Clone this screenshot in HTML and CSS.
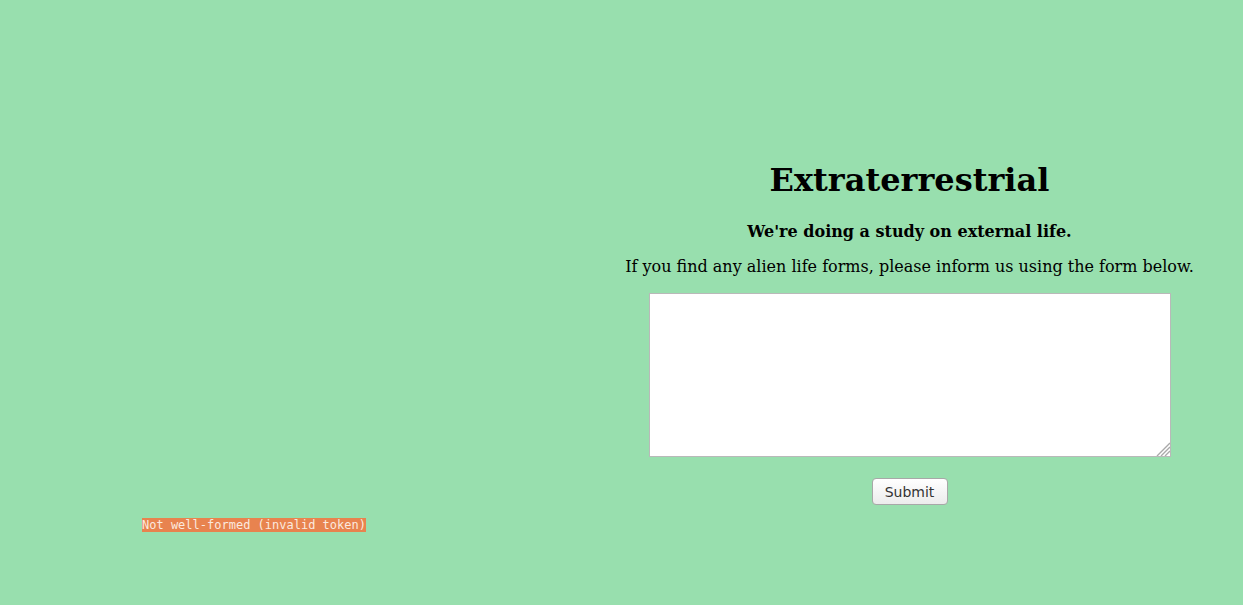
FILE: index.html
```html
<!DOCTYPE html>
<html>
<head>
<meta charset="utf-8">
<link rel="stylesheet" href="styles.css">
</head>
<body>
<div class="page">
  <div class="left">
    <span class="error">Not well-formed (invalid token)</span>
  </div>
  <div class="right">
    <h1 class="title">Extraterrestrial</h1>
    <p class="lead">We're doing a study on external life.</p>
    <p class="info">If you find any alien life forms, please inform us using the form below.</p>
    <form class="form">
      <div class="message-wrap">
        <textarea class="message"></textarea>
        <svg class="grip" width="14" height="14" viewBox="0 0 14 14" aria-hidden="true">
          <path d="M14 1 L1 14 M14 5 L5 14 M14 9 L9 14" stroke="#a9a9a9" stroke-width="1.4" fill="none"/>
        </svg>
      </div>
      <button type="button" class="submit">Submit</button>
    </form>
  </div>
</div>
</body>
</html>
```

FILE: styles.css
```css
html, body {
  margin: 0;
  padding: 0;
  background: #98dfae;
  height: 100%;
}
.page {
  display: flex;
  height: 605px;
}
.left {
  width: 585px;
  flex: none;
  box-sizing: border-box;
  padding-left: 142px;
  padding-top: 518px;
}
.error {
  display: inline-block;
  font-family: "DejaVu Sans Mono", monospace;
  font-size: 12px;
  line-height: 14px;
  height: 14px;
  background: #e8834f;
  color: #fbe9df;
  white-space: nowrap;
  vertical-align: top;
}
.right {
  width: 649px;
  flex: none;
  padding-top: 162px;
  text-align: center;
  font-family: "DejaVu Serif", serif;
  color: #000;
}
.title {
  margin: 0;
  font-size: 32px;
  font-weight: bold;
  line-height: 37px;
}
.lead {
  margin: 23px 0 0;
  font-size: 16px;
  font-weight: bold;
  line-height: 19px;
}
.info {
  margin: 16px 0 0;
  font-size: 16px;
  line-height: 19px;
}
.form {
  margin: 17px 0 0;
  display: flex;
  flex-direction: column;
  align-items: center;
}
.message-wrap {
  position: relative;
  width: 522px;
  height: 164px;
}
.message {
  display: block;
  width: 522px;
  height: 164px;
  box-sizing: border-box;
  border: 1px solid #b9b9b9;
  background: #fff;
  margin: 0;
  padding: 2px;
  resize: none;
}
.grip {
  position: absolute;
  right: 1px;
  bottom: 1px;
  display: block;
}
.submit {
  margin-top: 21px;
  width: 76px;
  height: 27px;
  box-sizing: border-box;
  border: 1px solid #a8a8a8;
  border-radius: 4px;
  background: linear-gradient(#ffffff, #ececec);
  font-family: "DejaVu Sans", sans-serif;
  font-size: 14px;
  color: #333;
  padding: 0;
}
```
